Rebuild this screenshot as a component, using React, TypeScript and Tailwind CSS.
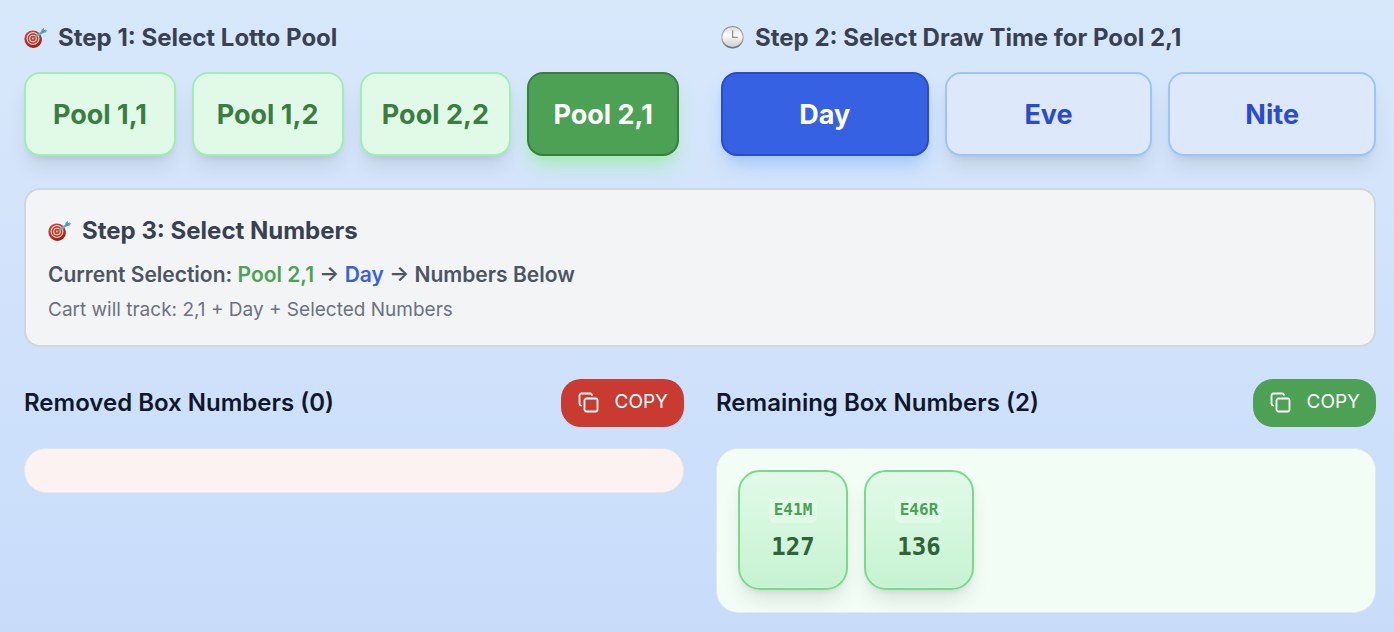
import { useState } from "react";
import clsx from "clsx";

const POOLS = ["1,1", "1,2", "2,2", "2,1"];
const TIMES = ["Day", "Eve", "Nite"];

const REMAINING = [
  { code: "E41M", value: "127" },
  { code: "E46R", value: "136" },
];

function TargetIcon() {
  return (
    <svg viewBox="0 0 24 24" className="size-6 shrink-0" aria-hidden="true">
      <defs>
        <linearGradient id="target-rim" x1="0" y1="0" x2="0.4" y2="1">
          <stop offset="0" stopColor="#d8463a" />
          <stop offset="1" stopColor="#a5231c" />
        </linearGradient>
      </defs>
      <ellipse cx="9.4" cy="13.8" rx="8.4" ry="8.2" fill="#8c1d18" />
      <ellipse cx="8.9" cy="12.7" rx="8.6" ry="8.3" fill="url(#target-rim)" />
      <circle cx="9" cy="12.5" r="6.5" fill="#ecd8d5" />
      <circle cx="9" cy="12.5" r="5.4" fill="#c93a32" />
      <circle cx="9" cy="12.5" r="3.8" fill="#ecd8d5" />
      <circle cx="9" cy="12.5" r="2.7" fill="#c4372f" />
      <circle cx="9" cy="12.5" r="1" fill="#f0dcd8" />
      <path d="M9.4 12.4 13 9.8" stroke="#a5812f" strokeWidth="1.5" />
      <path d="M12.4 10.4 18.5 6" stroke="#5fb4ba" strokeWidth="2.2" strokeLinecap="round" />
      <path d="M17 6.4 17.5 3.6 20 1.8 20.2 4.3 23.2 4.2 21.8 6.4 18.2 7.4Z" fill="#67a9b2" />
      <path d="M17.6 6.6 21.6 3.8" stroke="#3b7f91" strokeWidth="0.8" />
    </svg>
  );
}

function ClockIcon() {
  return (
    <svg viewBox="0 0 24 24" className="size-6 shrink-0" aria-hidden="true">
      <defs>
        <linearGradient id="clock-rim" x1="0" y1="0" x2="0" y2="1">
          <stop offset="0" stopColor="#8f8f8f" />
          <stop offset="0.5" stopColor="#bdbdbd" />
          <stop offset="1" stopColor="#6b6b6b" />
        </linearGradient>
        <linearGradient id="clock-face" x1="0" y1="0" x2="0" y2="1">
          <stop offset="0" stopColor="#dcdcdc" />
          <stop offset="0.4" stopColor="#fbfbfb" />
          <stop offset="1" stopColor="#cfcfcf" />
        </linearGradient>
      </defs>
      <circle cx="11.5" cy="11.3" r="11.3" fill="url(#clock-rim)" />
      <circle cx="11.5" cy="11" r="10" fill="url(#clock-face)" />
      <path d="M11.6 4.3V11.3H16.8" fill="none" stroke="#8f8f8f" strokeWidth="1.3" />
    </svg>
  );
}

function CopyIcon() {
  return (
    <svg
      viewBox="0 0 24 24"
      className="size-6 shrink-0"
      fill="none"
      stroke="currentColor"
      strokeWidth="1.8"
      strokeLinecap="round"
      strokeLinejoin="round"
      aria-hidden="true"
    >
      <rect x="7.5" y="8.5" width="13" height="13" rx="2" />
      <path d="M4 15.500A2 2 0 0 1 2.500 13.500V5.500A2 2 0 0 1 4.500 3.500H13A2 2 0 0 1 15 5" />
    </svg>
  );
}

function CopyButton({ className }: { className: string }) {
  return (
    <button
      type="button"
      className={clsx(
        "flex h-12 items-center gap-3.5 rounded-[20px] px-4 pb-0.5 text-[19px] leading-6 text-white",
        className,
      )}
    >
      <CopyIcon />
      COPY
    </button>
  );
}

const heading = "flex items-center gap-2.5 text-2xl font-bold text-[#374151]";
const choice =
  "h-21 min-w-0 rounded-2xl border-2 pt-0.5 text-[27px] leading-8 font-bold whitespace-nowrap";
const softShadow = "shadow-[0_13px_20px_-4px_rgba(0,0,0,0.1),0_5px_8px_-5px_rgba(0,0,0,0.1)]";

export default function App() {
  const [pool, setPool] = useState("2,1");
  const [time, setTime] = useState("Day");

  return (
    <main className="min-h-screen bg-linear-to-b from-[#d8e8fb] via-[#d0e2fb] to-[#c8dcfa] pt-5.5 pr-4.5 pb-5 pl-6 font-['Inter',sans-serif]">
      <div className="grid grid-cols-2 gap-10.5">
        <section>
          <h3 className={clsx(heading, "mb-4.5")}>
            <TargetIcon />
            Step 1: Select Lotto Pool
          </h3>
          <div className="grid grid-cols-4 gap-4">
            {POOLS.map((p) => (
              <button
                key={p}
                type="button"
                onClick={() => setPool(p)}
                className={clsx(
                  choice,
                  p === pool
                    ? "border-[#3b7d40] bg-[#4ca154] text-white shadow-[0_13px_20px_-4px_#a5ebb8,0_5px_8px_-5px_#a5ebb8]"
                    : "border-[#a0eeb1] bg-[#e1fae8] text-[#3b7d40]",
                  p !== pool && softShadow,
                )}
              >
                Pool {p}
              </button>
            ))}
          </div>
        </section>

        <section>
          <h3 className={clsx(heading, "mb-4.5")}>
            <ClockIcon />
            Step 2: Select Draw Time for Pool {pool}
          </h3>
          <div className="grid grid-cols-3 gap-4">
            {TIMES.map((t) => (
              <button
                key={t}
                type="button"
                onClick={() => setTime(t)}
                className={clsx(
                  choice,
                  t === time
                    ? "border-[#2a4bd0] bg-[#3761e3] text-white shadow-[0_13px_20px_-4px_#a5c8f8,0_5px_8px_-5px_#a5c8f8]"
                    : "border-[#9cc4f8] bg-[#dde8fa] text-[#2a4bd0]",
                  t !== time && softShadow,
                )}
              >
                {t}
              </button>
            ))}
          </div>
        </section>
      </div>

      <section className="mt-8 rounded-2xl border-2 border-[#d2d5da] bg-[#f3f4f6] px-5.5 pt-[25px] pb-[21px]">
        <h3 className={heading}>
          <TargetIcon />
          Step 3: Select Numbers
        </h3>
        <p className="mt-3 text-[21px] leading-8 font-semibold text-[#4b5563]">
          Current Selection: <span className="text-[#4ca154]">Pool {pool}</span> →{" "}
          <span className="text-[#3761e3]">{time}</span> → Numbers Below
        </p>
        <p className="mt-[5px] text-[19px] leading-7 text-[#6b7280]">
          Cart will track: {pool} + {time} + Selected Numbers
        </p>
      </section>

      <div className="mt-8 grid grid-cols-2 items-start gap-8">
        <section>
          <div className="mb-[21px] flex items-center justify-between">
            <h3 className="text-2xl font-semibold text-[#0f172a]">Removed Box Numbers (0)</h3>
            <CopyButton className="bg-[#c93a31]" />
          </div>
          <div className="h-[45px] rounded-[22px] border border-[#e5e7eb] bg-[#fcf2f1]" />
        </section>

        <section>
          <div className="mb-[21px] flex items-center justify-between">
            <h3 className="text-2xl font-semibold text-[#0f172a]">
              Remaining Box Numbers ({REMAINING.length})
            </h3>
            <CopyButton className="bg-[#4ca154]" />
          </div>
          <div className="flex gap-4 rounded-[22px] border border-[#e0e9e6] bg-[#f2fdf5] p-[21px] pb-5.5">
            {REMAINING.map((n) => (
              <div
                key={n.code}
                className={clsx(
                  "flex h-30 w-[110px] flex-col items-center justify-center gap-2 rounded-[22px] border-2 border-[#79da8d] bg-linear-to-b from-[#e1fae8] to-[#c6f3d2] font-['DejaVu_Sans_Mono',monospace] font-bold",
                  softShadow,
                )}
              >
                <span className="rounded-md bg-[#e1fae8] px-[5px] text-base leading-[26px] text-[#4ca154]">
                  {n.code}
                </span>
                <span className="text-2xl text-[#2f6338]">{n.value}</span>
              </div>
            ))}
          </div>
        </section>
      </div>
    </main>
  );
}
